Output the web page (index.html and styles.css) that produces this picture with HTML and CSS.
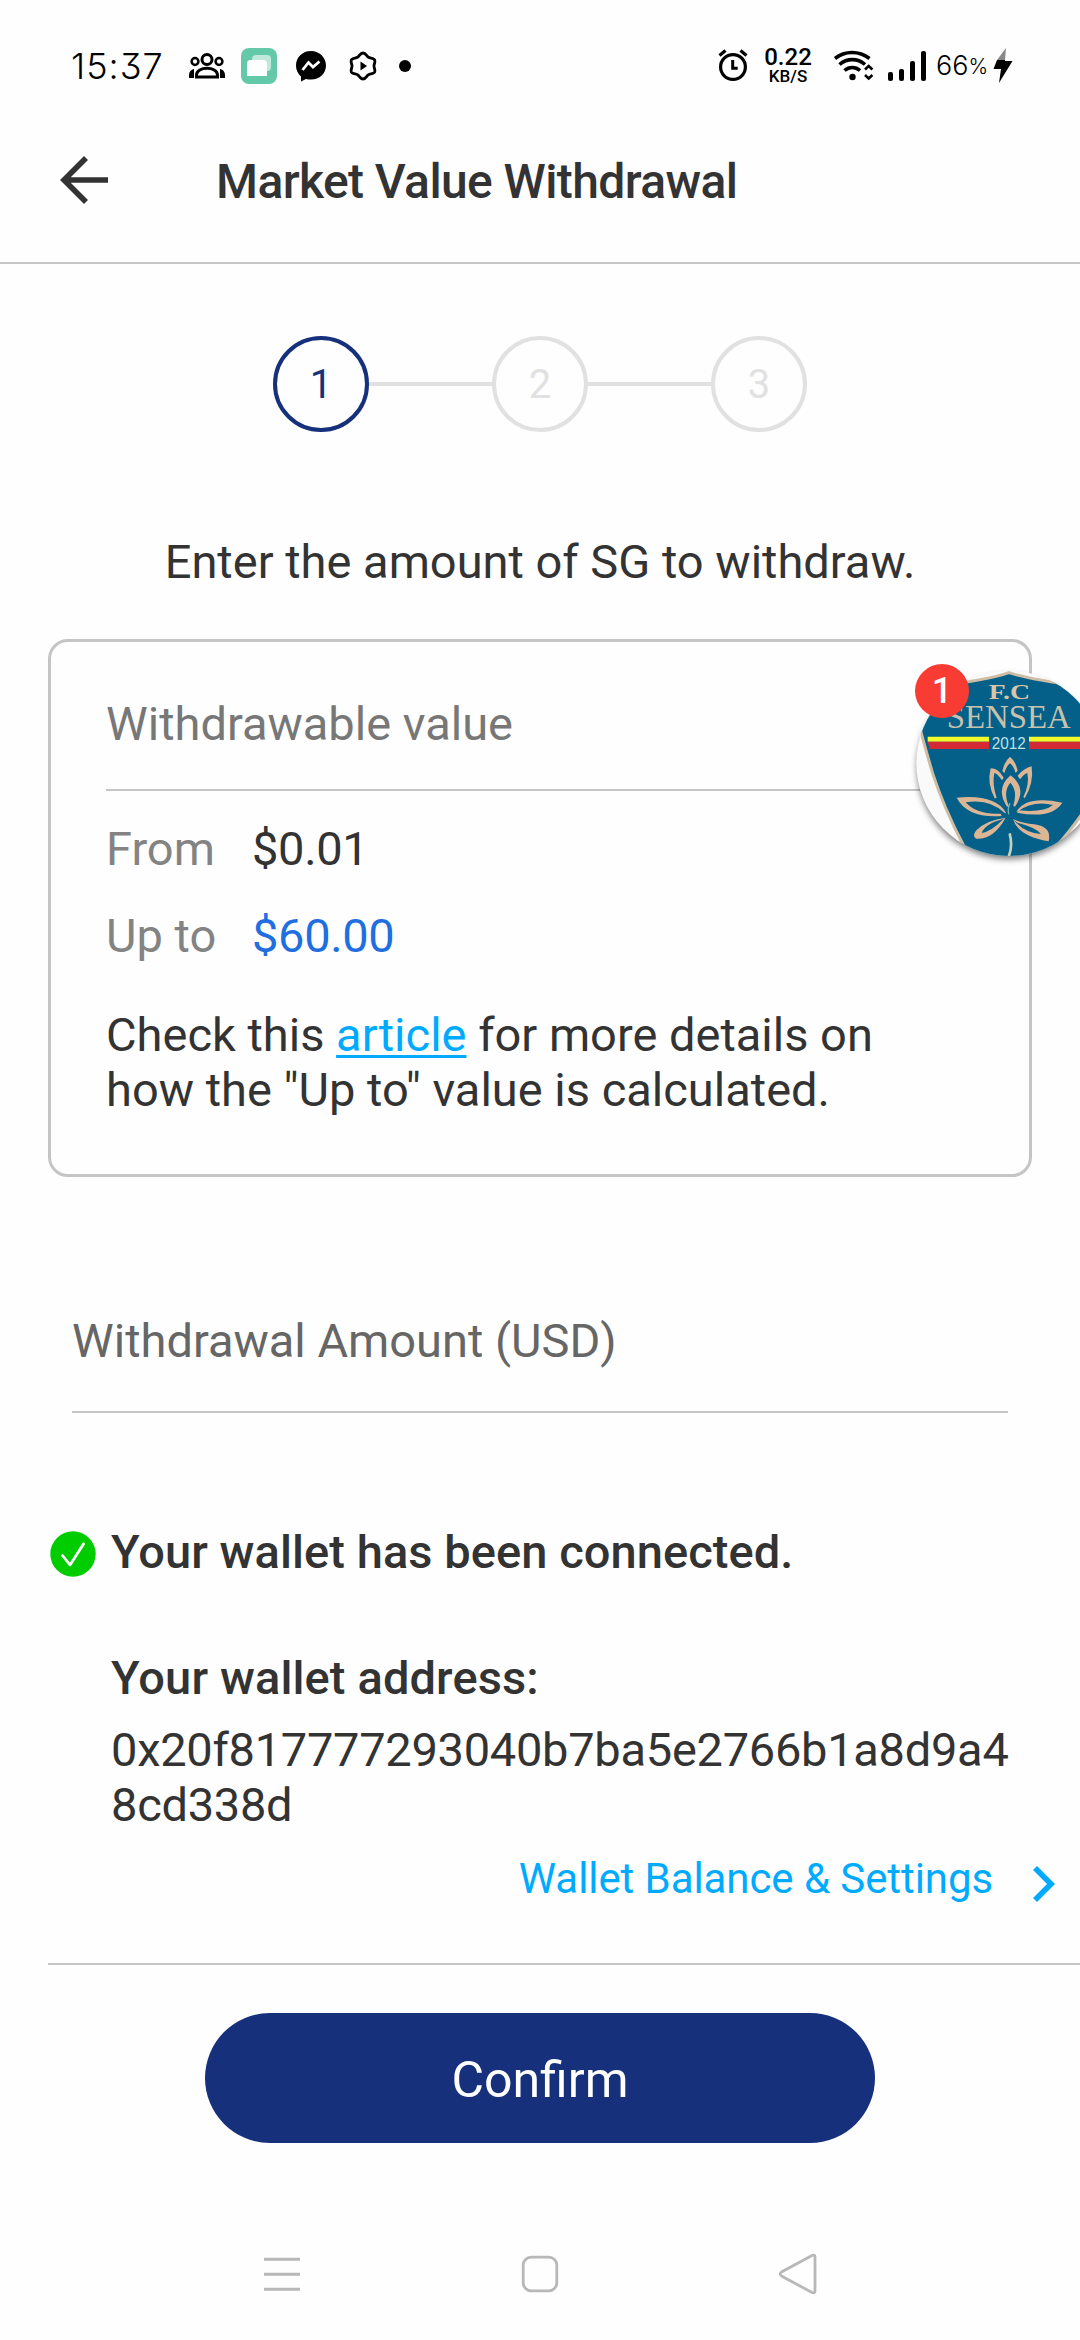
FILE: index.html
```html
<!DOCTYPE html>
<html lang="en">
<head>
<meta charset="utf-8">
<title>Market Value Withdrawal</title>
<link rel="stylesheet" href="styles.css">
</head>
<body>
<div class="screen">
  <div class="status">
    <span class="clock">15:37</span>
    <svg class="status-left" viewBox="0 0 240 40" width="240" height="40">
      <g fill="none" stroke="#000" stroke-width="3">
        <circle cx="22" cy="12.500" r="5"/>
        <circle cx="10" cy="14.500" r="3.400" stroke-width="2.500"/>
        <circle cx="34" cy="14.500" r="3.400" stroke-width="2.500"/>
        <path d="M11.500 30v-2c0-9 21-9 21 0v2z"/>
      </g>
      <path d="M4 31v-3c0-3 2-5.500 5-6v9zM40 31v-3c0-3-2-5.500-5-6v9z"/>
      <rect x="56" y="1" width="36" height="36" rx="8" fill="#64c9a9"/>
      <rect x="67" y="8" width="19" height="16" rx="4" fill="#c0e9dc"/>
      <path d="M65.500 13H78a4 4 0 0 1 4 4v12H62V16.500A3.500 3.500 0 0 1 65.500 13z" fill="#fff"/>
      <path d="M126 4c-8.600 0-15 6.300-15 14.500 0 4.500 1.800 8.200 5 10.900V34.500l5-2.600c1.600.4 3.300.6 5 .6 8.600 0 15-6.100 15-14S134.600 4 126 4z"/>
      <path d="M117.500 23l6-7.500 4.500 4.500 6.500-5.500" fill="none" stroke="#fff" stroke-width="2.800"/>
      <path d="M178 6c3 0 3.500 3.200 5.500 4.300 2 1.100 5.500.4 6.300 3 .6 2.200-.8 3.500-.8 5.700s1.400 3.500.8 5.700c-.8 2.600-4.300 1.900-6.300 3-2 1.100-2.500 4.300-5.500 4.300s-3.500-3.200-5.500-4.300c-2-1.100-5.500-.4-6.300-3-.6-2.200.8-3.500.8-5.700s-1.400-3.500-.8-5.700c.8-2.600 4.300-1.900 6.300-3 2-1.100 2.500-4.300 5.500-4.300z" fill="none" stroke="#000" stroke-width="2.800"/>
      <path d="M175.500 14.500v9l6.500-4.500z"/>
      <circle cx="220" cy="19" r="6"/>
    </svg>
    <div class="status-right">
      <svg viewBox="0 0 32 36" width="32" height="36">
        <g fill="none" stroke="#000">
          <circle cx="16" cy="20" r="12.400" stroke-width="3.200"/>
          <path d="M15.700 13v8.300h5" stroke-width="3"/>
          <path d="M2.500 8.500l6-5M29.500 8.500l-6-5" stroke-width="3.200"/>
        </g>
      </svg>
      <div class="speed"><span class="rate">0.22</span><span class="unit">KB/S</span></div>
      <svg class="wifi" viewBox="0 0 42 34" width="42" height="34">
        <g fill="none" stroke="#000" stroke-width="3.600">
          <path d="M2 10.500c10-8 24-8 34.500 0"/>
          <path d="M6.500 16.500c7.500-6.500 18-6.500 25.500 0"/>
          <path d="M11.500 22.500c4.500-4 11-4 15.500 0"/>
          <path d="M32 21.500l3.700-3.500 3.700 3.500M32 27l3.700 3.500 3.700-3.500" stroke-width="2.600"/>
        </g>
        <circle cx="19.500" cy="29" r="3.200"/>
      </svg>
      <svg class="signal" viewBox="0 0 40 32" width="40" height="32">
        <rect x="1" y="22" width="5" height="9" rx="2"/>
        <rect x="12" y="19" width="5" height="12" rx="2"/>
        <rect x="23" y="11" width="5" height="20" rx="2"/>
        <rect x="34" y="1" width="5" height="30" rx="2"/>
      </svg>
      <span class="battery">66<span class="percent">%</span></span>
      <svg class="bolt" viewBox="0 0 20 36" width="20" height="36">
        <path d="M13 1L4 13h8z" fill="#888"/>
        <path d="M4 13h8v1h7.500L6 36l2-14H.500z"/>
      </svg>
    </div>
  </div>

  <header class="header">
    <svg class="back" viewBox="0 0 50 50" width="50" height="50">
      <path d="M26 3L4 25l22 22M5 25h43" fill="none" stroke="#333" stroke-width="5.600"/>
    </svg>
    <h1 class="title">Market Value Withdrawal</h1>
  </header>

  <main class="content">
    <div class="steps">
      <span class="step step-active">1</span><span class="bar"></span>
      <span class="step">2</span><span class="bar"></span>
      <span class="step">3</span>
    </div>
    <p class="lead">Enter the amount of SG to withdraw.</p>

    <section class="card">
      <h2 class="card-title">Withdrawable value</h2>
      <div class="row from"><span class="label">From</span><span class="value">$0.01</span></div>
      <div class="row upto"><span class="label">Up to</span><span class="value max">$60.00</span></div>
      <p class="note">Check this <a class="link">article</a> for more details on<br>how the "Up to" value is calculated.</p>
    </section>

    <div class="amount">Withdrawal Amount (USD)</div>

    <section class="wallet">
      <div class="connected">
        <svg viewBox="0 0 46 46" width="46" height="46">
          <circle cx="23" cy="23" r="22.700" fill="#00cc00"/>
          <path d="M12.500 24.500l7.500 9.500L33.500 13" fill="none" stroke="#fff" stroke-width="2.800" stroke-linecap="round" stroke-linejoin="round"/>
        </svg>
        <span>Your wallet has been connected.</span>
      </div>
      <div class="address-label">Your wallet address:</div>
      <div class="address">0x20f817777293040b7ba5e2766b1a8d9a48cd338d</div>
      <a class="settings">
        <span>Wallet Balance &amp; Settings</span>
        <svg viewBox="0 0 24 36" width="24" height="36"><path d="M3 2l16 16L3 34" fill="none" stroke="#00aaff" stroke-width="5.600"/></svg>
      </a>
    </section>

    <div class="footer"><button class="confirm">Confirm</button></div>
  </main>

  <nav class="nav">
    <svg viewBox="0 0 40 44" width="40" height="44"><path d="M2 7.200h36M2 22.200h36M2 37.200h36" stroke="#b8b8b8" stroke-width="3"/></svg>
    <svg viewBox="0 0 40 44" width="40" height="44"><rect x="3.200" y="5.200" width="33.600" height="33.600" rx="8" fill="none" stroke="#b8b8b8" stroke-width="2.800"/></svg>
    <svg viewBox="0 0 40 44" width="40" height="44"><path d="M34 3.500L3.500 20Q1 22 3.500 24L34 40.500Q37 41.500 37 39V5Q37 2.500 34 3.500z" fill="none" stroke="#b8b8b8" stroke-width="2.800"/></svg>
  </nav>

  <svg class="club" viewBox="0 0 600 720" width="200" height="240">
    <defs>
      <clipPath id="disc"><circle cx="387" cy="370" r="278"/></clipPath>
      <filter id="shade" x="-20%" y="-20%" width="140%" height="140%"><feGaussianBlur stdDeviation="10"/></filter>
    </defs>
    <circle cx="387" cy="382" r="276" fill="#000" opacity=".5" filter="url(#shade)"/>
    <circle cx="387" cy="370" r="278" fill="#fafafa"/>
    <g clip-path="url(#disc)">
      <path d="M90 150Q320 122 387 98Q460 122 690 150Q695 300 655 430Q625 510 530 618L480 730H300L250 615Q190 500 158 400Q125 290 90 150z" fill="#046089" stroke="#cdbda5" stroke-width="9"/>
      <path d="M143 290H327V305H143zM447 290H620V305H447z" fill="#f1fb29"/>
      <path d="M143 305H327V327H149zM447 305H620V327H447z" fill="#d42a35"/>
      <text x="326" y="177" class="club-fc" textLength="124" lengthAdjust="spacingAndGlyphs">F.C</text>
      <text x="200" y="264" class="club-name" textLength="372" lengthAdjust="spacingAndGlyphs">SENSEA</text>
      <text x="335" y="327" class="club-year" textLength="102" lengthAdjust="spacingAndGlyphs">2012</text>
      <g fill="#dcb594" fill-rule="evenodd">
        <path d="M367 393Q373 365 390 350Q408 365 413 393L406 398Q402 380 390 370Q378 380 373 400z"/>
        <path d="M344 475Q320 430 332 385Q355 385 371 413L366 421Q352 400 343 399Q336 432 350 474z"/>
        <path d="M434 475Q462 430 455 379Q432 384 413 407L420 418Q432 402 442 399Q449 432 430 471z"/>
        <path d="M381 500Q345 445 392 406Q443 445 405 500L400 497Q414 452 391 428Q368 455 386 498z"/>
        <path d="M378 518Q345 462 230 473Q262 535 365 528L362 521Q290 525 257 487Q330 475 375 520z"/>
        <path d="M409 515Q440 465 547 488Q515 538 411 518L418 511Q490 518 519 495Q460 480 412 515z"/>
        <path d="M377 533Q320 540 290 570Q275 585 288 596Q340 600 377 533L368 539Q335 573 305 579Q315 552 368 538z"/>
        <path d="M399 537Q415 590 506 604Q516 560 463 553Q425 550 399 537L412 548Q468 562 483 582Q440 580 410 550z"/>
      </g>
      <path d="M389 580Q399 620 386 650" fill="none" stroke="#c5d2ba" stroke-width="8"/>
      <path d="M386 523Q382 505 390 490" fill="none" stroke="#79b5b8" stroke-width="4"/>
    </g>
    <circle cx="186" cy="153" r="81" fill="#f83c33"/>
    <text x="186" y="189" class="club-count">1</text>
  </svg>
</div>
</body>
</html>
```
FILE: styles.css
```css
* { box-sizing: border-box; }
body { margin: 0; background: #fefefe; }
h1, h2, p { margin: 0; font-weight: 400; font-size: inherit; }

.screen {
  position: relative;
  width: 1080px;
  height: 2340px;
  overflow: hidden;
  display: flex;
  flex-direction: column;
  font-family: Roboto, "Liberation Sans", sans-serif;
  font-size: 47px;
  line-height: 55px;
  color: #333;
  background: #fefefe;
}

/* status bar */
.status {
  height: 120px;
  padding: 47px 67px 0 71px;
  display: flex;
  align-items: flex-start;
  color: #000;
}
.clock {
  width: 114px;
  font-family: Inter, sans-serif;
  font-weight: 300;
  font-size: 36px;
  line-height: 38px;
  letter-spacing: 1px;
  font-feature-settings: "cv09";
  white-space: nowrap;
}
.status-right {
  flex: 1;
  display: flex;
  align-items: flex-start;
  justify-content: flex-end;
}
.speed {
  width: 50px;
  margin: 0 20px 0 14px;
  display: flex;
  flex-direction: column;
  align-items: center;
  font-weight: 500;
}
.rate { font-size: 24px; line-height: 20px; }
.unit { font-size: 17px; line-height: 18px; }
.wifi { margin-top: 1px; }
.signal { margin: 3px 9px 0 12px; }
.battery {
  width: 53px;
  font-family: Inter, sans-serif;
  font-weight: 300;
  font-size: 27px;
  line-height: 38px;
  white-space: nowrap;
}
.percent { font-size: 21px; vertical-align: 1px; }
.bolt { margin-left: 4px; }

/* header */
.header {
  height: 144px;
  padding: 34px 0 0 60px;
  display: flex;
  border-bottom: 2px solid #c5c5c6;
}
.back { margin-top: 1px; }
.title { margin-left: 106px; font-weight: 500; letter-spacing: -.6px; line-height: 56px; font-size: 48px; }

.content { display: flex; flex-direction: column; }

/* progress */
.steps {
  margin-top: 72px;
  display: flex;
  justify-content: center;
  align-items: center;
}
.step {
  width: 96px;
  height: 96px;
  border: 4px solid #e1e1e1;
  border-radius: 50%;
  color: #e1e1e1;
  font-size: 40px;
  line-height: 89px;
  text-align: center;
}
.step-active { border-color: #16307c; color: #16307c; }
.bar { width: 123px; height: 4px; background: #e1e1e1; }

.lead { margin-top: 102px; text-align: center; }

/* limits card */
.card {
  height: 538px;
  margin: 50px 48px 0;
  padding: 54px 55px 0;
  border: 3px solid #c5c5c6;
  border-radius: 20px;
}
.card-title { padding-bottom: 38px; border-bottom: 2px solid #c5c5c6; color: #777; }
.row { display: flex; }
.from { margin-top: 30px; }
.upto { margin-top: 32px; }
.label { width: 146px; color: #838383; }
.value { letter-spacing: -.35px; }
.max { color: #1f6fe0; }
.note { margin-top: 44px; }
.link {
  color: #00aaff;
  text-decoration: underline;
  text-decoration-thickness: 3px;
  text-underline-offset: 4px;
}

.amount {
  margin: 136px 72px 0;
  padding-bottom: 43px;
  border-bottom: 2px solid #c5c5c6;
  color: #666;
}

/* wallet */
.wallet {
  margin: 111px 0 0 48px;
  padding-bottom: 59px;
  border-bottom: 2px solid #c5c5c6;
  display: flex;
  flex-direction: column;
}
.connected { display: flex; gap: 15px; padding-left: 2px; font-weight: 500; letter-spacing: .06px; }
.connected svg { margin-top: 7px; }
.address-label { margin: 71px 0 0 63px; font-weight: 500; letter-spacing: .12px; }
.address { width: 902px; margin: 17px 0 0 63px; word-break: break-all; letter-spacing: -.28px; }
.settings {
  margin: 22px 24px 0 0;
  display: flex;
  justify-content: flex-end;
  gap: 39px;
  color: #00aaff;
  font-size: 42px;
  line-height: 50px;
  letter-spacing: -.08px;
}
.settings svg { margin-top: 12px; }

.footer { margin-top: 48px; display: flex; justify-content: center; }
.confirm {
  width: 670px;
  height: 130px;
  padding: 4px 0 0;
  border: 0;
  border-radius: 65px;
  background: #16307c;
  color: #fff;
  font-family: inherit;
  font-size: 50px;
}

/* system navigation */
.nav {
  margin-top: 109px;
  padding: 0 262px 0 262px;
  display: flex;
  justify-content: space-between;
}

/* floating club badge */
.club { position: absolute; left: 880px; top: 640px; }
.club-fc { font: bold 62px "Liberation Serif", serif; fill: #d9c6a8; }
.club-name { font: 98px "Liberation Serif", serif; fill: #c8c2ac; }
.club-year { font: 48px "Liberation Sans", sans-serif; fill: #bfe0e6; }
.club-count { font: 500 108px Roboto, sans-serif; fill: #fff; text-anchor: middle; }
```
